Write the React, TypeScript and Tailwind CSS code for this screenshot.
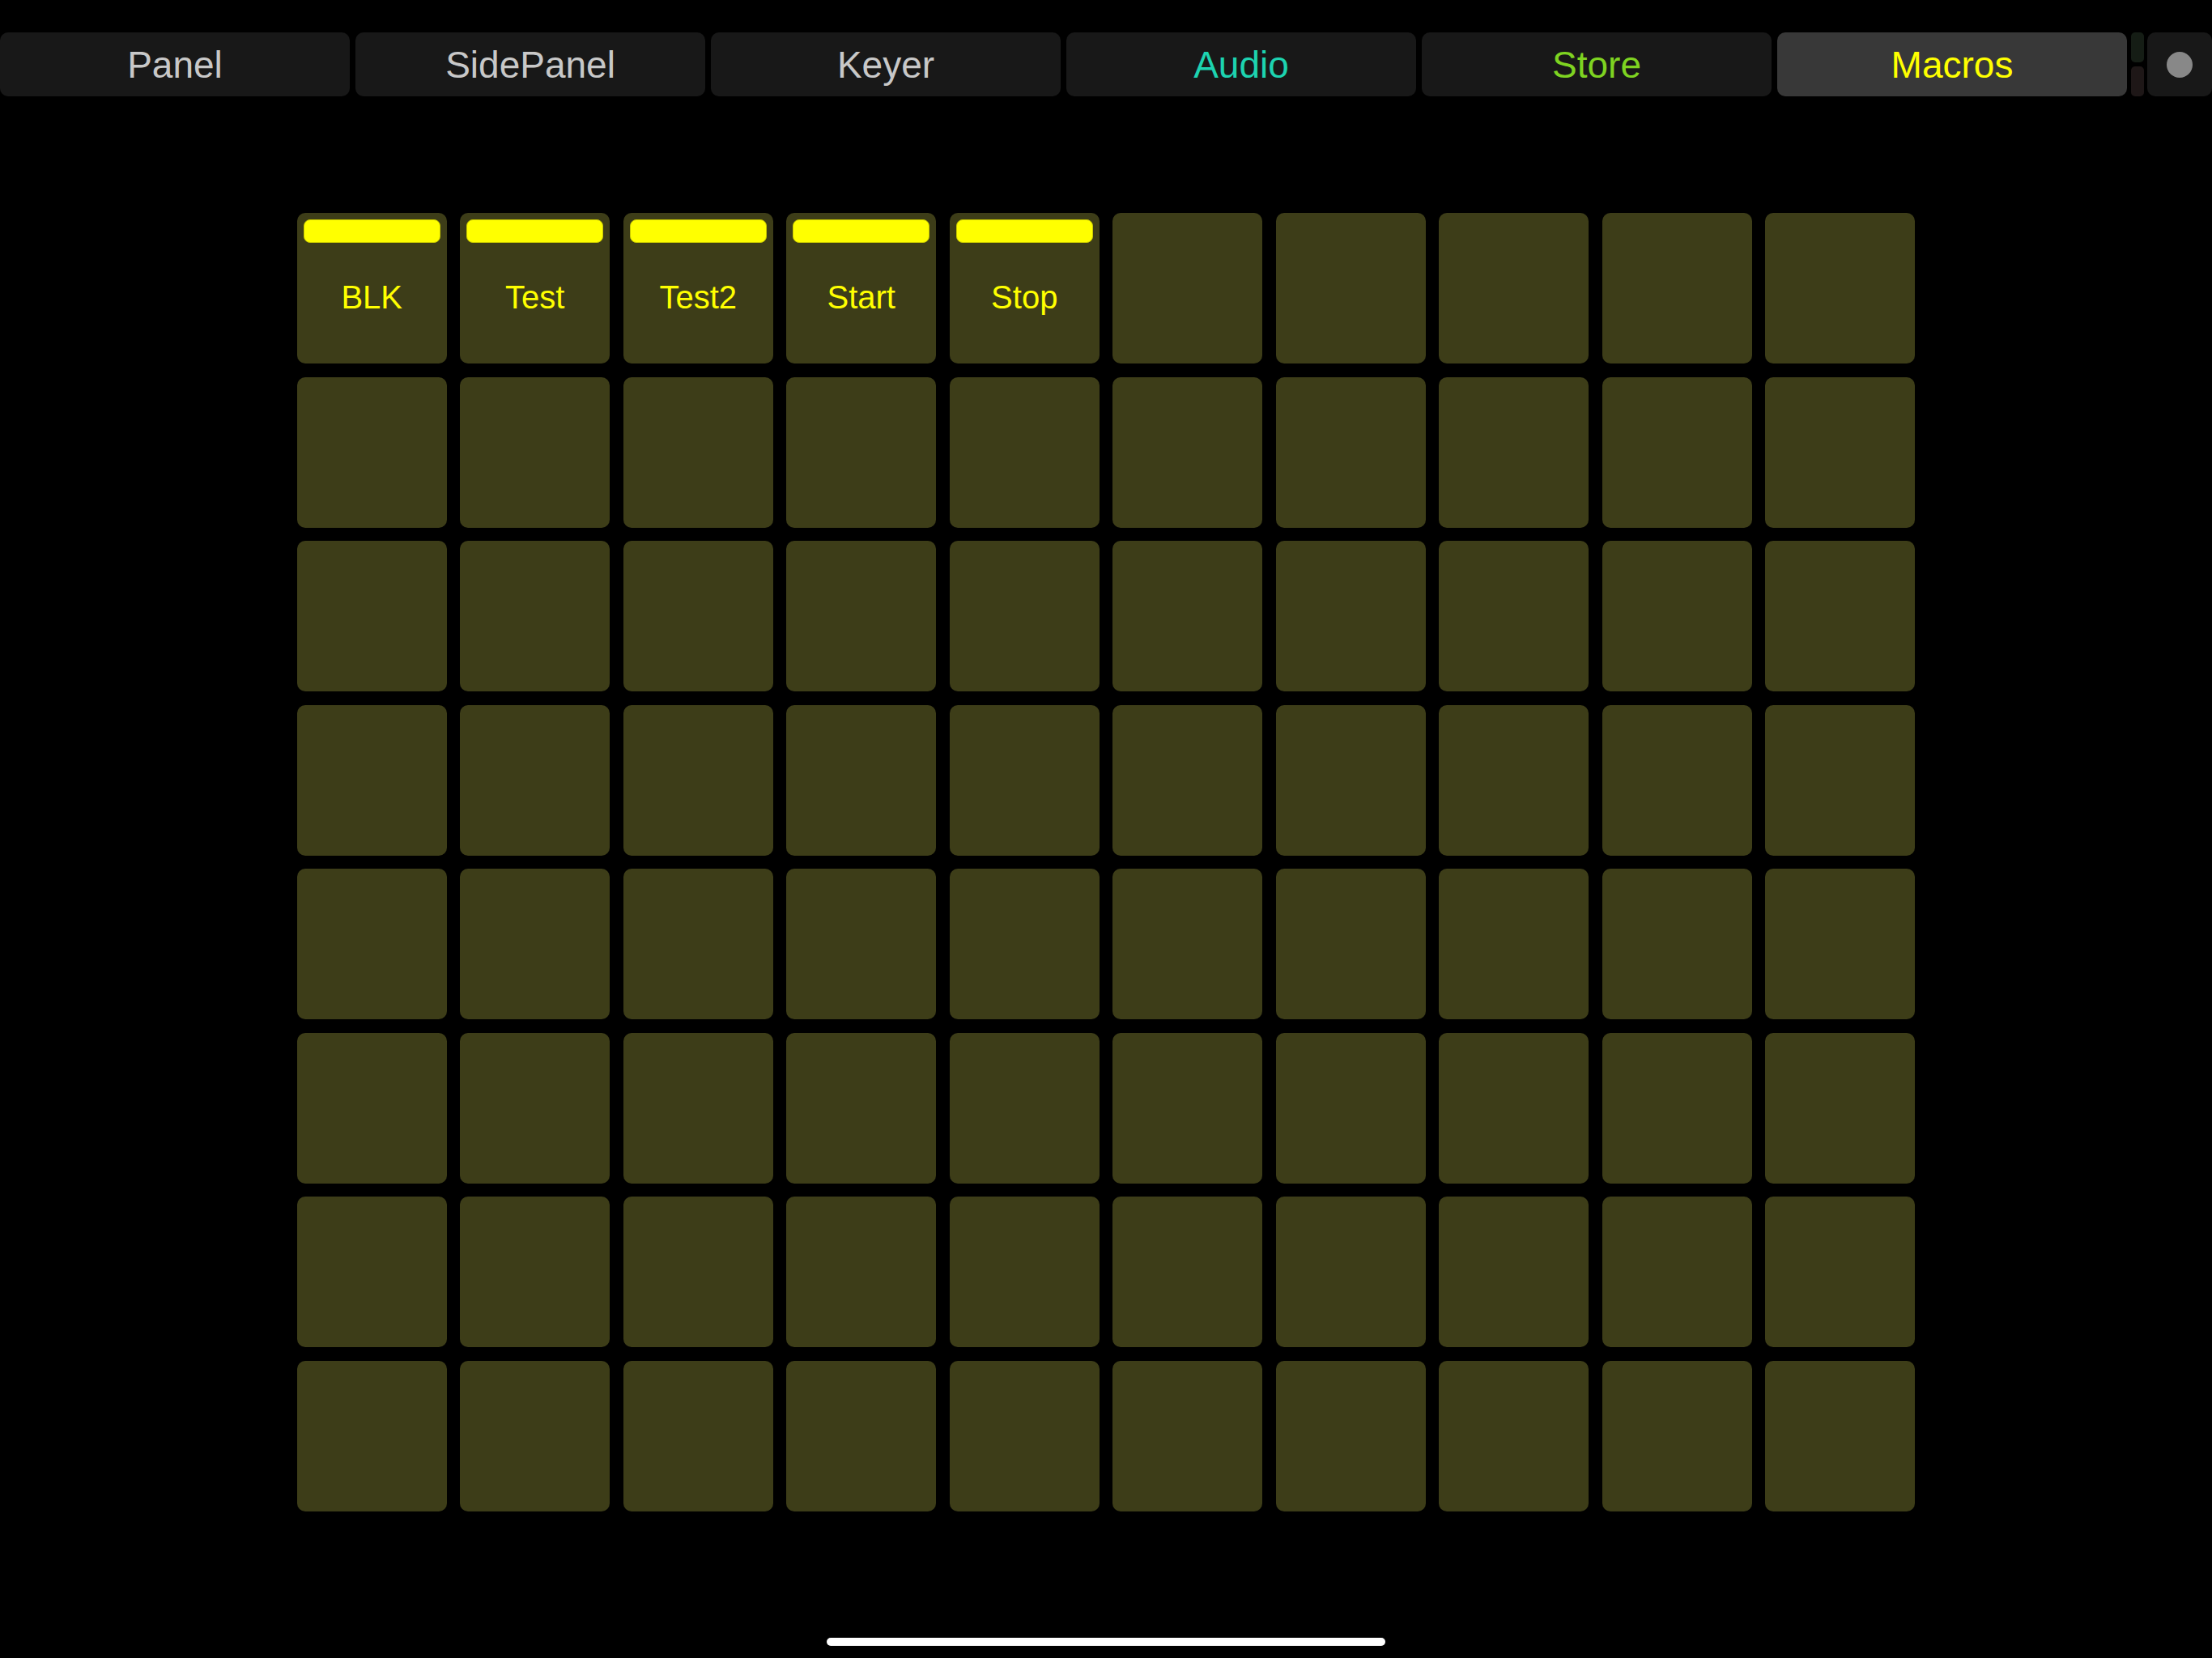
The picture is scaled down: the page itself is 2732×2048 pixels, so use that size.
import React from "react";

type Tab = { label: string; color: string; active?: boolean };

const TABS: Tab[] = [
    { label: "Panel", color: "text-[#c8c8c8]" },
    { label: "SidePanel", color: "text-[#c8c8c8]" },
    { label: "Keyer", color: "text-[#c8c8c8]" },
    { label: "Audio", color: "text-[#1dd3b0]" },
    { label: "Store", color: "text-[#7ed321]" },
    { label: "Macros", color: "text-[#ffff00]", active: true },
];

// first row holds the named macros, everything else is empty
const MACROS = ["BLK", "Test", "Test2", "Start", "Stop"];
const COLS = 10;
const ROWS = 8;

const MacroCell = ({ label }: { label?: string }) => (
    <div className="flex h-[186px] w-[185px] flex-col rounded-[10px] bg-[#3d3d18]">
        {label && (
            <>
                <div className="mx-2 mt-2 h-[29px] rounded-[8px] border border-[#c8c800] bg-[#ffff00]" />
                <div className="mt-[47px] text-center text-[40px] leading-[40px] text-[#ffff00]">{label}</div>
            </>
        )}
    </div>
);

export default function App() {
    const cells = Array.from({ length: COLS * ROWS }, (_, i) => (i < MACROS.length ? MACROS[i] : undefined));

    return (
        <div className="relative h-[2048px] w-full overflow-hidden bg-black font-['Liberation_Sans',Arial,sans-serif]">
            {/* top tab bar */}
            <div className="flex h-[79px] items-stretch pt-0 mt-[40px]">
                <div className="flex gap-[7px]">
                    {TABS.map(t => (
                        <div
                            key={t.label}
                            className={`flex w-[432px] items-center justify-center rounded-[10px] ${t.active ? "bg-[#383838]" : "bg-[#181818]"}`}
                        >
                            <span className={`text-[46px] leading-none ${t.color}`}>{t.label}</span>
                        </div>
                    ))}
                </div>
                <div className="ml-[5px] flex w-[16px] flex-col gap-[5px]">
                    <div className="flex-1 rounded-[5px] bg-[#151d15]" />
                    <div className="flex-1 rounded-[5px] bg-[#1e1717]" />
                </div>
                <div className="ml-[4px] flex w-[80px] items-center justify-center rounded-[10px] bg-[#181818]">
                    <div className="h-[32px] w-[32px] rounded-full bg-[#888888]" />
                </div>
            </div>

            {/* macro grid */}
            <div className="mt-[144px] flex justify-center">
                <div className="grid grid-cols-[repeat(10,185px)] gap-[16.5px]">
                    {cells.map((label, i) => (
                        <MacroCell key={i} label={label} />
                    ))}
                </div>
            </div>

            {/* home indicator */}
            <div className="absolute bottom-[15px] left-1/2 h-[10px] w-[690px] -translate-x-1/2 rounded-full bg-white" />
        </div>
    );
}
